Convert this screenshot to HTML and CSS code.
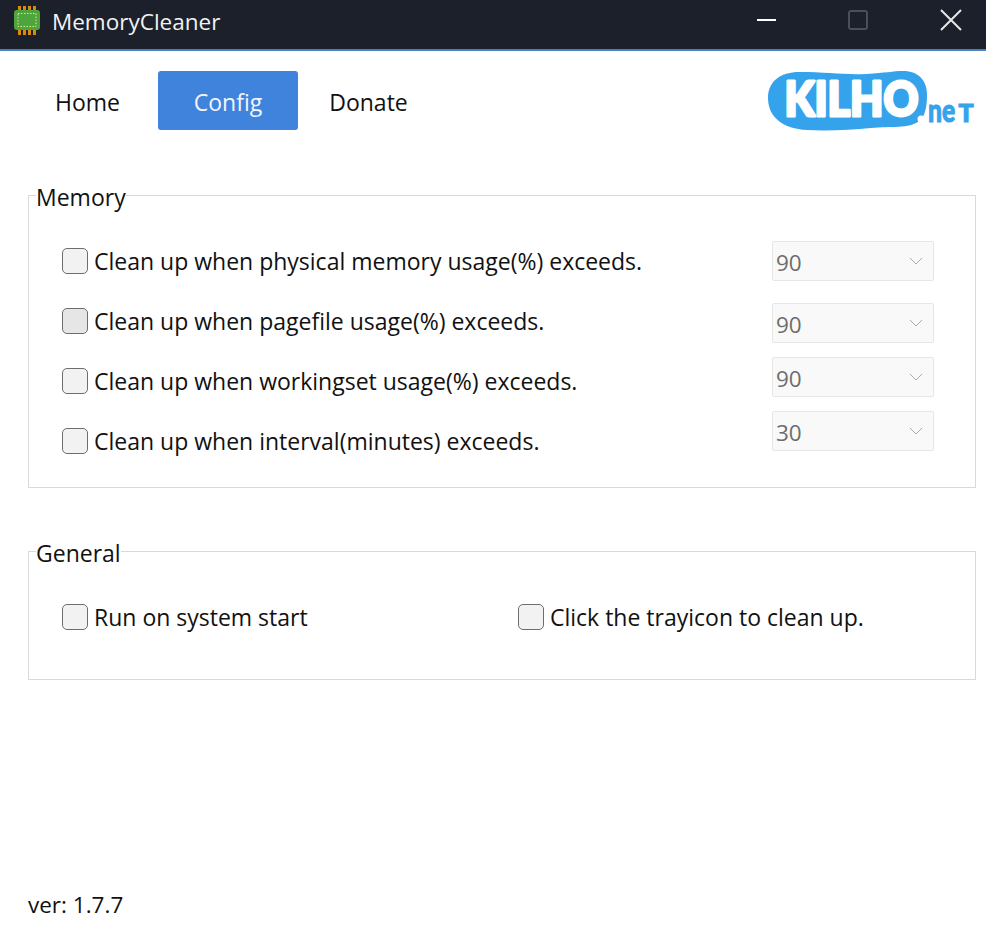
FILE: index.html
```html
<!DOCTYPE html>
<html lang="en">

<head>
  <meta charset="UTF-8">
  <title>MemoryCleaner</title>
  <link rel="stylesheet" href="styles.css">
</head>

<body>
  <div class="titlebar">
    <svg class="app-icon" width="26" height="30" viewBox="0 0 26 30">
      <g fill="#d98a0c">
        <rect x="4" y="0" width="3" height="29" />
        <rect x="9" y="0" width="3" height="29" />
        <rect x="14" y="0" width="3" height="29" />
        <rect x="19" y="0" width="3" height="29" />
      </g>
      <rect x="0" y="4" width="26" height="20" rx="3" fill="#4ea53c" />
      <rect x="4" y="7.5" width="18" height="13" fill="none" stroke="#d6ec8c" stroke-dasharray="1.5 1.5" />
    </svg>
    <span class="app-title">MemoryCleaner</span>
    <div class="win-buttons">
      <button class="win-btn"><svg width="22" height="22" viewBox="0 0 22 22"><path d="M3 11H22" stroke="#fff" stroke-width="2" /></svg></button>
      <button class="win-btn"><svg width="22" height="22" viewBox="0 0 22 22"><rect x="2" y="2" width="18" height="18" rx="2" fill="none" stroke="#4a4f58" stroke-width="2" /></svg></button>
      <button class="win-btn"><svg width="22" height="22" viewBox="0 0 22 22"><path d="M1 1L21 21M21 1L1 21" stroke="#e8e8e8" stroke-width="2" /></svg></button>
    </div>
  </div>

  <div class="topbar">
    <nav class="tabs">
      <a class="tab">Home</a>
      <a class="tab active">Config</a>
      <a class="tab">Donate</a>
    </nav>
    <svg class="logo" width="208" height="62" viewBox="0 0 208 62">
      <path d="M1 27C1 10 14 1 32 1C60 1 76 4 100 3C118 2 126 0 136 0C152 0 160 10 160 24C160 36 158 46 152 50C142 58 124 55 104 57C84 59 60 60 40 59C16 58 1 46 1 27Z" fill="#35a2ec" />
      <text class="logo-main" x="17.5" y="44.5" textLength="134" lengthAdjust="spacingAndGlyphs">KILHO</text>
      <circle cx="154" cy="48" r="3.5" fill="#fff" />
      <text class="logo-net" transform="translate(161 51) scale(.75 1)">ne</text>
      <text class="logo-net-t" x="191.5" y="51">T</text>
    </svg>
  </div>

  <fieldset class="group memory">
    <legend>Memory</legend>
    <div class="memory-grid">
      <div class="check-list">
        <label class="check"><span class="box"></span>Clean up when physical memory usage(%) exceeds.</label>
        <label class="check"><span class="box hover"></span>Clean up when pagefile usage(%) exceeds.</label>
        <label class="check"><span class="box"></span>Clean up when workingset usage(%) exceeds.</label>
        <label class="check"><span class="box"></span>Clean up when interval(minutes) exceeds.</label>
      </div>
      <div class="select-list">
        <div class="select first">90<svg width="14" height="8" viewBox="0 0 14 8"><path d="M1 1L7 7L13 1" fill="none" stroke="#aaa" /></svg></div>
        <div class="select">90<svg width="14" height="8" viewBox="0 0 14 8"><path d="M1 1L7 7L13 1" fill="none" stroke="#aaa" /></svg></div>
        <div class="select">90<svg width="14" height="8" viewBox="0 0 14 8"><path d="M1 1L7 7L13 1" fill="none" stroke="#aaa" /></svg></div>
        <div class="select">30<svg width="14" height="8" viewBox="0 0 14 8"><path d="M1 1L7 7L13 1" fill="none" stroke="#aaa" /></svg></div>
      </div>
    </div>
  </fieldset>

  <fieldset class="group general">
    <legend>General</legend>
    <div class="general-row">
      <label class="check"><span class="box"></span>Run on system start</label>
      <label class="check"><span class="box"></span>Click the trayicon to clean up.</label>
    </div>
  </fieldset>

  <div class="version">ver: 1.7.7</div>
</body>

</html>
```

FILE: styles.css
```css
* {
  box-sizing: border-box;
  margin: 0;
  padding: 0;
  font-family: "Open Sans", "Noto Sans", sans-serif;
}

body {
  background: white;
  color: #111;
  width: 986px;
  height: 944px;
  overflow: hidden;
  font-size: 23px;
}

.titlebar {
  height: 51px;
  background: #1b202b;
  border-bottom: 2px solid #4a80c4;
  display: flex;
  align-items: center;
  padding-left: 14px;
}

.app-icon {
  margin-right: 12px;
  margin-top: -7px;
}

.app-title {
  color: #f2f2f2;
  font-size: 22.5px;
  margin-top: -6px;
}

.win-buttons {
  margin-left: auto;
  display: flex;
  gap: 71px;
  padding-right: 24px;
  margin-top: -9px;
}

.win-btn {
  background: none;
  border: none;
  width: 22px;
  height: 22px;
}

.topbar {
  height: 128px;
  display: flex;
  justify-content: space-between;
  padding: 20px 11px 0 20px;
}

.tabs {
  display: flex;
  gap: 3px;
  height: 59px;
}

.tab {
  width: 135px;
  height: 59px;
  padding-top: 4px;
  line-height: 55px;
  text-align: center;
  border-radius: 3px;
}

.tab.active {
  width: 140px;
  background: #4083dd;
  color: #f2f6fc;
}

.logo {
  display: block;
}

.logo-main {
  font-family: "Lato", sans-serif;
  font-weight: 900;
  font-size: 47px;
  fill: #fff;
  stroke: #fff;
  stroke-width: 3;
  stroke-linejoin: round;
}

.logo-net {
  font-family: "Lato", sans-serif;
  font-weight: 900;
  font-size: 33px;
  fill: #35a2ec;
  stroke: #35a2ec;
  stroke-width: 1;
}

.logo-net-t {
  font-family: "Lato", sans-serif;
  font-weight: 900;
  font-size: 25px;
  fill: #35a2ec;
  stroke: #35a2ec;
  stroke-width: 1;
}

.group {
  margin: 0 10px 0 28px;
  border: 1px solid #d9d9d9;
  padding: 0 33px;
}

.group legend {
  margin-left: -26px;
  padding-top: 4px;
  line-height: 28px;
  background: white;
}

.memory {
  height: 309px;
  margin-bottom: 47px;
}

.general {
  height: 145px;
}

.memory-grid {
  display: flex;
  justify-content: space-between;
  padding: 30px 8px 0 0;
}

.check-list {
  display: flex;
  flex-direction: column;
  gap: 20px;
}

.check {
  display: flex;
  align-items: center;
  gap: 6px;
  height: 40px;
}

.box {
  width: 26px;
  height: 26px;
  border: 1.5px solid #6e6e6e;
  border-radius: 5px;
  background: #f2f2f2;
}

.box.hover {
  background: #e6e6e6;
}

.select-list {
  display: flex;
  flex-direction: column;
  gap: 14px;
}

.select {
  width: 162px;
  height: 40px;
  background: #f9f9f9;
  border: 1px solid #e6e6e6;
  border-radius: 2px;
  color: #6d6d6d;
  font-size: 22.5px;
  display: flex;
  align-items: center;
  justify-content: space-between;
  padding: 2px 10px 0 3px;
}

.select svg {
  margin-top: -2px;
}

.select.first {
  margin-bottom: 8px;
}

.general-row {
  display: grid;
  grid-template-columns: 456px 1fr;
  padding-top: 30px;
}

.version {
  margin: 209px 0 0 28px;
  font-size: 22.5px;
}
```
